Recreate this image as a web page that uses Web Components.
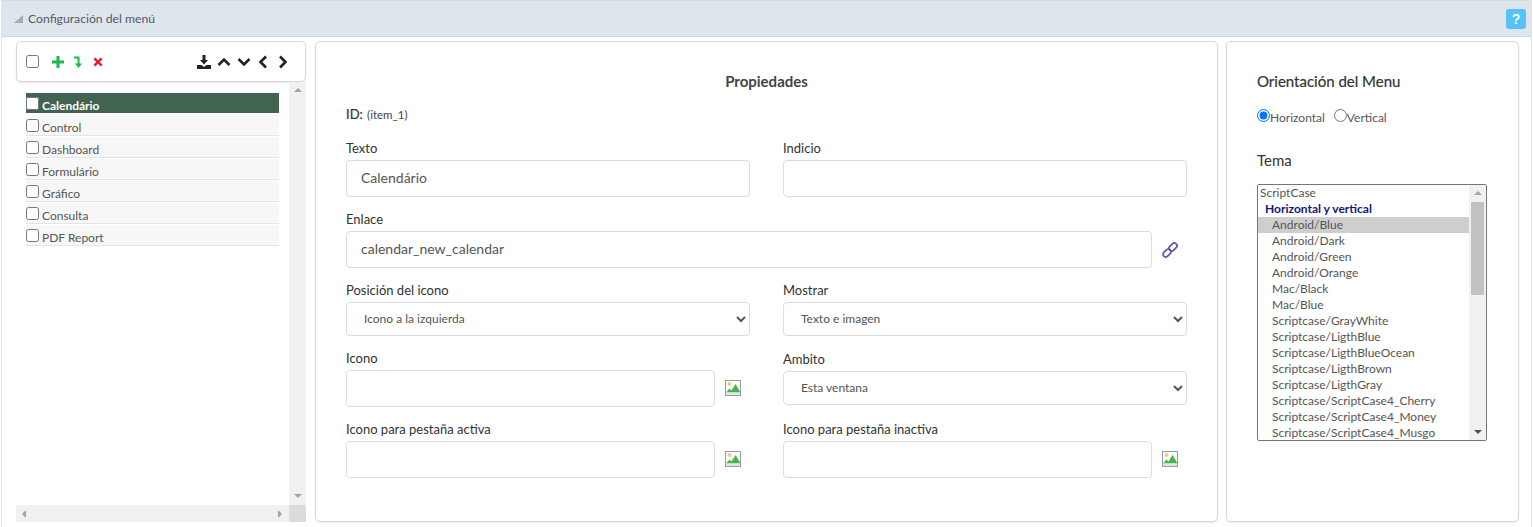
<!DOCTYPE html>
<html>
<head>
<meta charset="utf-8">
<title>Configuración del menú</title>
<style>
  html, body { margin: 0; padding: 0; background: #fff; }
  body { font-family: Lato, "Open Sans", sans-serif; color: #333; overflow: hidden; }
</style>
</head>
<body>
<menu-config></menu-config>

<script>
class PanelHeader extends HTMLElement {
  constructor() {
    super();
    this.attachShadow({ mode: 'open' });
    this.shadowRoot.innerHTML = `
      <style>
        :host {
          display: flex;
          align-items: center;
          height: 35px;
          box-sizing: content-box;
          background: #dfe5ed;
          border-top: 1px solid #d3dce6;
          border-bottom: 1px solid #cbd6e2;
          padding: 0 5px 0 12px;
          font-size: 12.2px;
          color: #4f5a66;
        }
        .arrow { width: 9px; height: 9px; margin-right: 5px; }
        .title { flex: 1; }
        .help {
          width: 20px; height: 20px; border-radius: 3px;
          background: #56c2f7; color: #fff;
          font: bold 14px/20px "Liberation Sans", sans-serif;
          text-align: center;
        }
      </style>
      <svg class="arrow" viewBox="0 0 9 9"><path d="M9 1v8H0z" fill="#a2abb6"/></svg>
      <span class="title"><slot></slot></span>
      <span class="help">?</span>
    `;
  }
}

class TreeToolbar extends HTMLElement {
  constructor() {
    super();
    this.attachShadow({ mode: 'open' });
    this.shadowRoot.innerHTML = `
      <style>
        :host {
          display: flex;
          align-items: center;
          height: 41px;
          box-sizing: border-box;
          background: #fff;
          border: 1px solid #d8d8d8;
          border-radius: 5px;
          box-shadow: 0 1px 2px rgba(0,0,0,.1);
          padding: 0 17px 0 9px;
        }
        input { width: 13px; height: 13px; margin: 0 13px 0 0; }
        svg { display: block; }
        .left { display: flex; gap: 9px; align-items: center; flex: 1; }
        .right { display: flex; gap: 6px; align-items: center; }
      </style>
      <input type="checkbox">
      <div class="left">
        <svg width="12" height="12" viewBox="0 0 12 12"><path d="M4.500 0h3v4.500H12v3H7.500V12h-3V7.500H0v-3h4.500z" fill="#1db84d"/></svg>
        <svg width="10" height="12" viewBox="0 0 10 12"><path d="M1 1.500h4.500V8" fill="none" stroke="#1db84d" stroke-width="2"/><path d="M2 7.500h7L5.500 12z" fill="#1db84d"/></svg>
        <svg width="10" height="10" viewBox="0 0 11 11" style="margin-left:1px"><path d="M1.500 1.500l8 8M9.500 1.500l-8 8" stroke="#e3262e" stroke-width="3"/></svg>
      </div>
      <div class="right">
        <svg width="14" height="14" viewBox="0 0 14 14"><path d="M5.500 0h3v5H11L7 9.500 3 5h2.500z" fill="#222"/><path d="M0 10h4.500l2.500 2 2.500-2H14v4H0z" fill="#222"/></svg>
        <svg width="14" height="10" viewBox="0 0 14 10"><path d="M1.500 8L7 2.500 12.500 8" fill="none" stroke="#222" stroke-width="2.600"/></svg>
        <svg width="14" height="10" viewBox="0 0 14 10"><path d="M1.500 2L7 7.500 12.500 2" fill="none" stroke="#222" stroke-width="2.600"/></svg>
        <svg width="10" height="14" viewBox="0 0 10 14" style="margin-left:1px"><path d="M8 1.500L2.500 7 8 12.500" fill="none" stroke="#222" stroke-width="2.600"/></svg>
        <svg width="10" height="14" viewBox="0 0 10 14" style="margin-left:4px"><path d="M2 1.500L7.500 7 2 12.500" fill="none" stroke="#222" stroke-width="2.600"/></svg>
      </div>
    `;
  }
}

class TreeRow extends HTMLElement {
  constructor() {
    super();
    this.attachShadow({ mode: 'open' });
    this.shadowRoot.innerHTML = `
      <style>
        :host {
          display: flex;
          align-items: flex-start;
          height: 20px;
          margin-bottom: 1px;
          background: #f7f7f7;
          border-bottom: 1px solid #e4e4e4;
          font-size: 12px;
          line-height: 14px;
          color: #555;
          box-sizing: content-box;
        }
        :host([selected]) {
          background: #426350;
          border-bottom-color: #fff;
          color: #fff;
          font-weight: bold;
        }
        input { width: 13px; height: 13px; margin: 4px 3px 0 0; flex: none; }
        span { padding-top: 6px; }
      </style>
      <input type="checkbox">
      <span><slot></slot></span>
    `;
  }
}

class TreePanel extends HTMLElement {
  constructor() {
    super();
    this.attachShadow({ mode: 'open' });
    this.shadowRoot.innerHTML = `
      <style>
        :host { display: flex; flex-direction: column; }
        .scroll {
          flex: 1;
          display: grid;
          grid-template-columns: 1fr 17px;
          grid-template-rows: 1fr 17px;
        }
        .list { padding: 11px 10px 0 10px; }
        .vbar {
          background: #f1f1f1;
          display: flex; flex-direction: column; justify-content: space-between; align-items: center;
          padding: 6px 0 7px;
        }
        .hbar {
          background: #f1f1f1;
          display: flex; justify-content: space-between; align-items: center;
          padding: 0 7px 0 6px;
        }
        .corner { background: #dcdcdc; }
        i { display: block; width: 0; height: 0; border: 4px solid transparent; }
        .up { border-bottom-color: #a3a3a3; border-top-width: 0; }
        .down { border-top-color: #a3a3a3; border-bottom-width: 0; }
        .lt { border-right-color: #a3a3a3; border-left-width: 0; }
        .rt { border-left-color: #a3a3a3; border-right-width: 0; }
      </style>
      <tree-toolbar></tree-toolbar>
      <div class="scroll">
        <div class="list"><slot></slot></div>
        <div class="vbar"><i class="up"></i><i class="down"></i></div>
        <div class="hbar"><i class="lt"></i><i class="rt"></i></div>
        <div class="corner"></div>
      </div>
    `;
  }
}

class PropField extends HTMLElement {
  constructor() {
    super();
    this.attachShadow({ mode: 'open' });
    const label = this.getAttribute('label');
    const value = this.getAttribute('value') || '';
    const type = this.getAttribute('type') || 'text';
    const after = this.getAttribute('after');
    const control = type === 'select'
      ? `<select><option>${value}</option></select>`
      : `<input type="text" value="${value}">`;
    const icons = {
      link: `<svg class="ic" style="margin-left:10px" width="16" height="16" viewBox="0 0 16 16"><g fill="none" stroke="#5b58a6" stroke-width="1.700"><rect x="8.300" y="0.500" width="5.400" height="9" rx="2.700" transform="rotate(45 11 5)"/><rect x="2.300" y="6.500" width="5.400" height="9" rx="2.700" transform="rotate(45 5 11)"/></g></svg>`,
      image: `<svg class="ic" style="margin-left:10px;margin-bottom:2px" width="16" height="16" viewBox="0 0 16 16"><rect x="0.500" y="0.500" width="15" height="15" fill="#fff" stroke="#8da0b3"/><circle cx="4.500" cy="4" r="2" fill="#e6d27e"/><path d="M1 12.500l3.500-4 2 2L10.500 4 15 11.500v1z" fill="#47b54a"/><rect x="1" y="12.500" width="14" height="2.500" fill="#dfe6ec"/></svg>`
    };
    this.shadowRoot.innerHTML = `
      <style>
        :host { display: block; color: #333; }
        label { display: block; font-size: 13px; line-height: 16px; height: 20px; }
        .row { display: flex; align-items: var(--field-align, center); height: var(--field-height, 37px); }
        input, select {
          flex: 1; min-width: 0; box-sizing: border-box;
          border: 1px solid #dcdcdc; border-radius: 4px; background: #fff;
          font-family: Lato, sans-serif; color: #555; outline: none;
        }
        input { height: 37px; padding: 0 14px 2px; font-size: 14px; }
        select { height: 34px; padding: 0 13px 2px; font-size: 12px; }
        .ic { flex: none; margin-right: var(--icon-gap, 0); }
      </style>
      <label>${label}</label>
      <div class="row">${control}${after ? icons[after] : ''}</div>
    `;
  }
}

class ThemeList extends HTMLElement {
  constructor() {
    super();
    this.attachShadow({ mode: 'open' });
    const items = ['Android/Blue', 'Android/Dark', 'Android/Green', 'Android/Orange', 'Mac/Black', 'Mac/Blue',
      'Scriptcase/GrayWhite', 'Scriptcase/LigthBlue', 'Scriptcase/LigthBlueOcean', 'Scriptcase/LigthBrown',
      'Scriptcase/LigthGray', 'Scriptcase/ScriptCase4_Cherry', 'Scriptcase/ScriptCase4_Money', 'Scriptcase/ScriptCase4_Musgo'];
    this.shadowRoot.innerHTML = `
      <style>
        :host {
          display: flex; width: 230px; height: 257px; box-sizing: border-box;
          border: 1px solid #767676; border-radius: 2px; overflow: hidden;
          font-size: 12px; color: #555;
        }
        .opts { flex: 1; min-width: 0; }
        .o { height: 16px; line-height: 16px; padding-left: 14px; white-space: nowrap; }
        .o.sel { background: #cecece; }
        .root { height: 16px; line-height: 16px; padding-left: 2px; }
        .grp { height: 16px; line-height: 16px; padding-left: 7px; color: #14147c; font-weight: bold; }
        .bar { width: 17px; background: #f1f1f1; display: flex; flex-direction: column; align-items: center; padding-top: 6px; box-sizing: border-box; }
        .thumb { width: 13px; height: 93px; background: #c1c1c1; margin-top: 7px; }
        i { display: block; width: 0; height: 0; border: 4px solid transparent; }
        .up { border-bottom-color: #a3a3a3; border-top-width: 0; }
        .down { border-top-color: #505050; border-bottom-width: 0; margin-top: auto; margin-bottom: 6px; }
      </style>
      <div class="opts">
        <div class="root">ScriptCase</div>
        <div class="grp">Horizontal y vertical</div>
        ${items.map((t, i) => `<div class="o${i === 0 ? ' sel' : ''}">${t}</div>`).join('')}
      </div>
      <div class="bar"><i class="up"></i><div class="thumb"></div><i class="down"></i></div>
    `;
  }
}

class PropertiesCard extends HTMLElement {
  constructor() {
    super();
    this.attachShadow({ mode: 'open' });
    this.shadowRoot.innerHTML = `
      <style>
        :host {
          display: block; box-sizing: border-box; background: #fff;
          border: 1px solid #d8d8d8; border-radius: 5px;
          box-shadow: 0 1px 2px rgba(0,0,0,.08);
          padding: 30px 30px 0 30px;
        }
        h2 { margin: 0; font-size: 15px; font-weight: bold; line-height: 18px; text-align: center; color: #444; }
        .id { margin: 16px 0 17px; font-size: 13px; line-height: 16px; height: 17px; color: #333; -webkit-text-stroke: .2px #333; }
        .id small { font-size: 11.500px; color: #444; -webkit-text-stroke: 0; margin-left: 1px; }
        .grid { display: grid; grid-template-columns: 404px 404px; column-gap: 33px; }
        .full { grid-column: 1 / 3; }
        prop-field { margin-bottom: 14px; }
        .sel { --field-height: 34px; }
        .amb { --field-height: 36px; --field-align: flex-start; padding-top: 1px; }
      </style>
      <h2>Propiedades</h2>
      <div class="id">ID: <small>(item_1)</small></div>
      <div class="grid">
        <prop-field label="Texto" value="Calendário"></prop-field>
        <prop-field label="Indicio"></prop-field>
        <prop-field class="full" label="Enlace" value="calendar_new_calendar" after="link" style="--icon-gap:9px"></prop-field>
        <prop-field class="sel" label="Posición del icono" type="select" value="Icono a la izquierda"></prop-field>
        <prop-field class="sel" label="Mostrar" type="select" value="Texto e imagen"></prop-field>
        <prop-field label="Icono" after="image" style="--icon-gap:9px"></prop-field>
        <prop-field class="amb" label="Ambito" type="select" value="Esta ventana"></prop-field>
        <prop-field label="Icono para pestaña activa" after="image" style="--icon-gap:9px"></prop-field>
        <prop-field label="Icono para pestaña inactiva" after="image" style="--icon-gap:9px"></prop-field>
      </div>
    `;
  }
}

class OrientationCard extends HTMLElement {
  constructor() {
    super();
    this.attachShadow({ mode: 'open' });
    this.shadowRoot.innerHTML = `
      <style>
        :host {
          display: block; box-sizing: border-box; background: #fff;
          border: 1px solid #d8d8d8; border-radius: 5px;
          box-shadow: 0 1px 2px rgba(0,0,0,.08);
          padding: 30px 30px 0 30px;
        }
        h3 { margin: 0; font-size: 15px; font-weight: normal; line-height: 18px; color: #333; -webkit-text-stroke: .2px #333; }
        .radios { display: flex; align-items: center; margin: 16px 0 0; height: 20px; font-size: 12px; color: #555; }
        .radios label { display: flex; align-items: center; margin-right: 9px; }
        .radios input { width: 13px; height: 13px; margin: 0; position: relative; top: -1px; }
        .radios span { padding-top: 2px; }
        h3.tema { margin: 25px 0 15px; -webkit-text-stroke: 0; }
      </style>
      <h3>Orientación del Menu</h3>
      <div class="radios">
        <label><input type="radio" name="ori" checked><span>Horizontal</span></label>
        <label><input type="radio" name="ori"><span>Vertical</span></label>
      </div>
      <h3 class="tema">Tema</h3>
      <theme-list></theme-list>
    `;
  }
}

class MenuConfig extends HTMLElement {
  constructor() {
    super();
    this.attachShadow({ mode: 'open' });
    this.shadowRoot.innerHTML = `
      <style>
        :host { display: block; margin: 0 1px; height: 527px; box-sizing: border-box; border-left: 1px solid #dfe5ed; border-right: 1px solid #dfe5ed; }
        .body {
          display: grid;
          grid-template-columns: 290px 903px 292px;
          column-gap: 9px;
          padding: 4px 0 5px 14px;
          height: 490px;
          box-sizing: border-box;
        }
        orientation-card { margin-left: -1px; }
      </style>
      <panel-header>Configuración del menú</panel-header>
      <div class="body">
        <tree-panel>
          <tree-row selected>Calendário</tree-row>
          <tree-row>Control</tree-row>
          <tree-row>Dashboard</tree-row>
          <tree-row>Formulário</tree-row>
          <tree-row>Gráfico</tree-row>
          <tree-row>Consulta</tree-row>
          <tree-row>PDF Report</tree-row>
        </tree-panel>
        <properties-card></properties-card>
        <orientation-card></orientation-card>
      </div>
    `;
  }
}

customElements.define('panel-header', PanelHeader);
customElements.define('tree-toolbar', TreeToolbar);
customElements.define('tree-row', TreeRow);
customElements.define('tree-panel', TreePanel);
customElements.define('prop-field', PropField);
customElements.define('theme-list', ThemeList);
customElements.define('properties-card', PropertiesCard);
customElements.define('orientation-card', OrientationCard);
customElements.define('menu-config', MenuConfig);
</script>
</body>
</html>
